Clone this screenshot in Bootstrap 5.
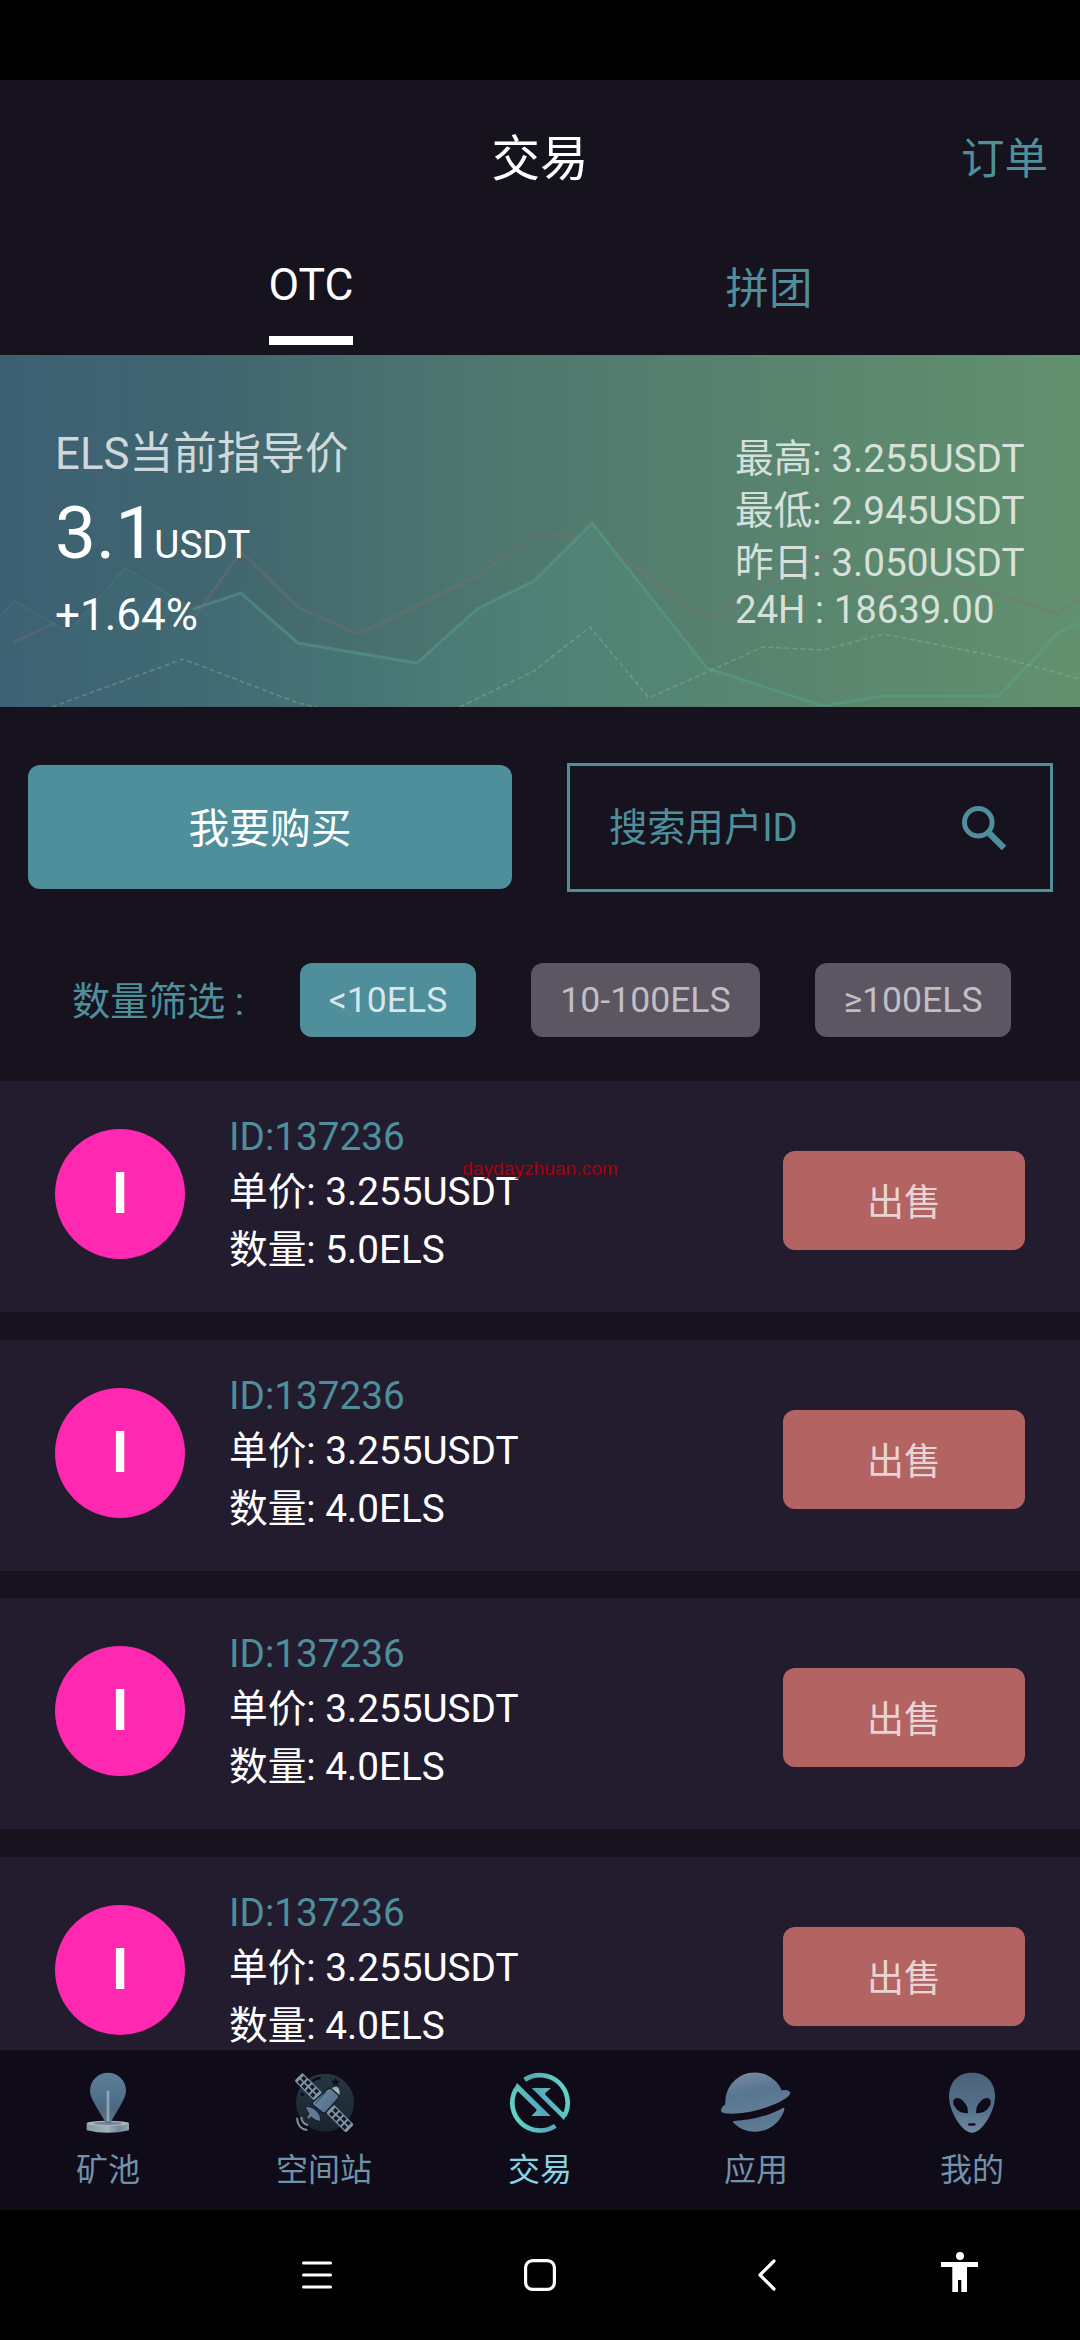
<!DOCTYPE html>
<html lang="zh-CN">
<head>
<meta charset="utf-8">
<title>交易</title>
<meta name="viewport" content="width=device-width, initial-scale=1">
<link href="https://cdn.jsdelivr.net/npm/bootstrap@5.3.0/dist/css/bootstrap.min.css" rel="stylesheet">
<style>
html,body{height:2340px;overflow:hidden}
body{background:#000;color:#fff;font-family:Roboto,"Noto Sans CJK SC",sans-serif;font-weight:400}
.phone{width:1080px;height:2340px}
.statusbar{height:80px}
.screen{height:1970px;background:#16121e}
.teal{color:#4e8f9b}
.topbar{height:157px;padding:3px 32px 0;display:grid;grid-template-columns:1fr auto 1fr}
.topbar h1{font-size:48.5px;font-weight:400;line-height:60px}
.topbar a{font-size:43.5px;line-height:60px;text-decoration:none}
.tabs{height:118px}
.tabs .nav-link{font-size:43.5px;line-height:52px;padding:27px 0 0;color:#4e8f9b;height:108px;border-bottom:9px solid transparent}
.tabs .nav-item{width:458px}
.tabs .nav-link.active{color:#fff;border-color:#fff;padding-top:22px;font-size:44.5px}
.banner{height:352px;background:linear-gradient(90deg,#3c6073 0%,#40656f 18%,#466d6f 30%,#4c756f 42%,#557f6e 62%,#62916f 100%)}
.chart{position:absolute;inset:0}
.quote{padding:69px 0 0 55px;line-height:60px}
.q-name{font-size:43.8px;height:60px;color:#ffffffc0}
.q-price{font-size:73px;line-height:98px;height:91px}
.q-unit{font-size:38.7px;margin-left:-2px}
.q-rate{font-size:44px;line-height:52px;padding-top:14px}
.stats{padding:78px 0 0;font-size:38.7px;color:#ffffffc0;width:345px}
.stats div{line-height:52px;height:52px;white-space:nowrap}
.stats div:last-child{line-height:42px;font-size:38.3px}
.actions{padding:56px 27px 0 28px;height:185px}
.buy{width:484px;height:124px;margin-top:2px;border-radius:12px;background:#4e8f9b;color:#fff;font-size:40.8px;border:0;padding:5px 0 0}
.search{width:486px;height:129px;border:3px solid #4e8f9b;padding:0 44px 0 39px;font-size:38.3px}
.filters{padding:27px 0 0 72px;height:189px;font-size:38.3px;gap:55px}
.filters>span{width:173px;flex:none;white-space:nowrap;padding-top:3px}
.pill{height:74px;border-radius:12px;font-size:35.6px;border:0;padding:2px 0 0;color:#ffffffa0;background:#5b5661;white-space:nowrap;width:229px}
.pill.on{background:#4e8f9b;color:#ffffffc8;width:176px}
.pill:last-child{width:196px}
.offers{height:969px;overflow:hidden;gap:27.6px}
.offer{height:231px;flex:none;background:#231c2f;padding:0 55px}
.avatar{width:130px;height:130px;border-radius:50%;background:#ff28b0;font-size:57px;font-weight:700;margin-top:-5px}
.info{margin-left:44px;font-size:38.7px;padding-top:28px;align-self:flex-start}
.info div{height:58px;line-height:56px}
.info div:first-child{height:55px}
.sell{width:242px;height:99px;border-radius:12px;background:#b46363;color:#ffffffb8;font-size:37px;border:0;margin-top:8px;padding:7px 0 0}
.mark-site{position:absolute;left:0;right:0;top:76px;text-align:center;font:19.2px/24px "Liberation Sans",sans-serif;color:#a80008}
.tabbar{height:160px;background:#0f0b18;color:#7291ab;font-size:32px}
.tabbar>a{width:216px;color:inherit;text-decoration:none;padding-top:14px}
.tabbar span{line-height:42px;margin-top:9px}
.tabbar .current{color:#86d4e6}
.sysbar{height:130px;padding-left:302px}
.sys-home{margin:0 202px 0 192px}
.person{margin:0 0 6px 165px}
</style>
<script src="https://cdn.jsdelivr.net/npm/bootstrap@5.3.0/dist/js/bootstrap.bundle.min.js"></script>
</head>
<body>
<div class="phone">
<div class="statusbar"></div>
<main class="screen">
<header class="topbar align-items-center"><span></span><h1 class="m-0">交易</h1><a href="#" class="teal text-end">订单</a></header>
<ul class="tabs nav justify-content-center list-unstyled m-0">
<li class="nav-item d-flex justify-content-center"><a class="nav-link active" href="#">OTC</a></li>
<li class="nav-item d-flex justify-content-center"><a class="nav-link" href="#">拼团</a></li>
</ul>
<section class="banner position-relative d-flex justify-content-between overflow-hidden">
<svg class="chart" width="1080" height="352" fill="none">
<defs><linearGradient id="area"><stop stop-color="#3f7f88" stop-opacity=".06"/><stop offset=".45" stop-color="#45898a" stop-opacity=".24"/><stop offset=".7" stop-color="#4f9182" stop-opacity=".38"/><stop offset="1" stop-color="#5a9880" stop-opacity=".1"/></linearGradient></defs>
<path d="M0 262L14 246L69 277L125 213L193 254L241 238L298 288L417 308L477 254L534 226L592 168L707 313L823 351H0Z" fill="url(#area)"/>
<path d="M0 262L14 246L69 277L125 213L193 254" stroke="#4f9090" stroke-opacity=".2" stroke-width="2"/>
<path d="M193 254L241 238L298 288L417 308L477 254L534 226L592 168L707 313L823 351L882 341H999L1058 278L1080 268" stroke="#58a38c" stroke-opacity=".45" stroke-width="3"/>
<path d="M14 287L55 268M193 264L241 197L298 252L358 279L477 221L534 181H577M620 202L707 263L823 198L882 242L940 222L1058 259L1080 243" stroke="#876d72" stroke-opacity=".3" stroke-width="3"/>
<path d="M52 352L183 304L298 348L317 352M460 352L534 316L590 272L649 343L763 292L823 295L884 279L999 302L1080 324" stroke="#9fc9a5" stroke-opacity=".32" stroke-width="1.6" stroke-dasharray="5 3"/>
</svg>
<div class="quote position-relative">
<div class="q-name">ELS当前指导价</div>
<div class="q-price">3.1<span class="q-unit">USDT</span></div>
<div class="q-rate">+1.64%</div>
</div>
<div class="stats position-relative"><div>最高: 3.255USDT</div><div>最低: 2.945USDT</div><div>昨日: 3.050USDT</div><div>24H : 18639.00</div></div>
</section>
<section class="actions d-flex justify-content-between align-items-start">
<button class="buy btn">我要购买</button>
<div class="search teal d-flex align-items-center justify-content-between"><span>搜索用户ID</span>
<svg width="44" height="44" viewBox="0 0 44 44" fill="none" stroke="#4e8f9b"><circle cx="16.300" cy="16.300" r="13.800" stroke-width="5"/><path d="M26 26L42 42" stroke-width="6.500"/></svg></div>
</section>
<section class="filters teal d-flex align-items-center"><span>数量筛选 :</span>
<button class="pill on">&lt;10ELS</button><button class="pill">10-100ELS</button><button class="pill">≥100ELS</button></section>
<section class="offers position-relative d-flex flex-column">
<article class="offer d-flex align-items-center"><div class="avatar d-flex align-items-center justify-content-center">I</div><div class="info"><div class="teal">ID:137236</div><div>单价: 3.255USDT</div><div>数量: 5.0ELS</div></div><button class="sell ms-auto">出售</button></article>
<article class="offer d-flex align-items-center"><div class="avatar d-flex align-items-center justify-content-center">I</div><div class="info"><div class="teal">ID:137236</div><div>单价: 3.255USDT</div><div>数量: 4.0ELS</div></div><button class="sell ms-auto">出售</button></article>
<article class="offer d-flex align-items-center"><div class="avatar d-flex align-items-center justify-content-center">I</div><div class="info"><div class="teal">ID:137236</div><div>单价: 3.255USDT</div><div>数量: 4.0ELS</div></div><button class="sell ms-auto">出售</button></article>
<article class="offer d-flex align-items-center"><div class="avatar d-flex align-items-center justify-content-center">I</div><div class="info"><div class="teal">ID:137236</div><div>单价: 3.255USDT</div><div>数量: 4.0ELS</div></div><button class="sell ms-auto">出售</button></article>
<div class="mark-site">daydayzhuan.com</div>
</section>
</main>
<nav class="tabbar d-flex">
<a href="#" class="d-flex flex-column align-items-center">
<svg width="80" height="76" viewBox="-21 0 240 228">
<defs>
<linearGradient id="pin" x2="0" y2="1"><stop stop-color="#5e7f9a"/><stop offset=".7" stop-color="#4b6b85"/><stop offset="1" stop-color="#8a9fb0"/></linearGradient>
<linearGradient id="base"><stop stop-color="#8399aa"/><stop offset=".5" stop-color="#a3b0ba"/><stop offset=".75" stop-color="#74899b"/><stop offset="1" stop-color="#91a3b1"/></linearGradient>
</defs>
<path d="M35 178V199Q98 214 162 199V178Z" fill="url(#base)"/><ellipse cx="98.500" cy="178" rx="63.500" ry="8" fill="#a9b4bd"/><ellipse cx="98.500" cy="178" rx="42" ry="5" fill="#758797"/>
<path d="M99 26A54 54 0 0 1 153 80C153 106 128 132 107 174H92C70 132 45 106 45 80A54 54 0 0 1 99 26Z" fill="url(#pin)"/><path d="M61 125Q99 142 137 125L107 176H92Z" fill="#46647d" fill-opacity=".65"/><path d="M95 80H103V172H95Z" fill="#a3b1bd" fill-opacity=".8"/></svg>
<span>矿池</span></a>
<a href="#" class="d-flex flex-column align-items-center">
<svg width="80" height="76" viewBox="-3 0 240 228">
<defs>
<linearGradient id="moon" x2="0" y2="1"><stop stop-color="#273641"/><stop offset="1" stop-color="#1a2430"/></linearGradient>
<linearGradient id="hull" x2="1" y2="1"><stop stop-color="#7590a8"/><stop offset="1" stop-color="#48647f"/></linearGradient>
<g id="panel"><rect x="-42" y="-17" width="84" height="34" rx="5" fill="#8295a7"/><path d="M-33 -8H36M-33 8H36" stroke="#111925" stroke-width="11" stroke-dasharray="12 6"/></g>
</defs>
<circle cx="120" cy="116" r="87" fill="url(#moon)"/>
<path d="M82 51Q94 42 107 42" stroke="#0b0e16" stroke-width="8" fill="none"/><path d="M152 41L156 50L166 51L158 57L161 67L152 61L143 67L146 57L138 51L148 50Z" fill="#0b0e16"/>
<path d="M48 88l8 6" stroke="#0b0e16" stroke-width="8"/>
<use href="#panel" transform="translate(70 68) rotate(45)"/><use href="#panel" transform="translate(165 164) rotate(45)"/>
<path d="M136 76Q146 66 157 69Q169 80 161 98Z" fill="#a4afb9"/>
<path d="M127 76Q133 70 140 75L160 93Q164 98 159 104L122 145Q117 149 111 145L84 123Q80 118 84 113Z" fill="url(#hull)" stroke="#141c28" stroke-width="4"/>
<path d="M123 84L91 119" stroke="#26384b" stroke-width="3"/>
<path d="M60 129Q75 124 92 138Q110 154 106 173Q77 168 66 139Z" fill="#5d7b96" stroke="#141c28" stroke-width="3"/>
<path d="M78 151L69 162" stroke="#71879a" stroke-width="6"/><g fill="none" stroke="#8492a0" stroke-width="6"><path d="M49 159Q50 180 69 183"/><path d="M36 161Q37 194 67 198"/></g></svg>
<span>空间站</span></a>
<a href="#" class="current d-flex flex-column align-items-center">
<svg width="80" height="76" viewBox="0 0 240 228">
<defs><linearGradient id="swap" gradientUnits="userSpaceOnUse" x1="30" y1="150" x2="210" y2="80"><stop stop-color="#63d8c8"/><stop offset=".5" stop-color="#55a7b9"/><stop offset="1" stop-color="#63d8c8"/></linearGradient></defs>
<g fill="none" stroke="url(#swap)" stroke-width="14"><path d="M74 47.400A83 83 0 0 1 193 156"/><path d="M166 185.600A83 83 0 0 1 47 77"/></g>
<g fill="url(#swap)"><path d="M95 72H153L136 87V92L187 143L201 148L192 168Z"/><path d="M152 156H94L109 141V136L55 83L39 80L51 57Z"/></g></svg>
<span>交易</span></a>
<a href="#" class="d-flex flex-column align-items-center">
<svg width="80" height="76" viewBox="0 0 240 228">
<defs><linearGradient id="planet" x2=".35" y2="1"><stop stop-color="#7b8ea3"/><stop offset=".55" stop-color="#587690"/><stop offset="1" stop-color="#617d96"/></linearGradient></defs>
<g fill="url(#planet)"><path d="M28 116A88 88 0 0 1 197 79Q220 75 223 87C221 104 160 132 100 144Q50 152 22 147Q11 143 17 133Q20 126 28 121Z"/><path d="M53 171C110 168 165 153 202 131Q207 131 204 140A92 92 0 0 1 57 181Q47 174 53 171Z"/></g></svg>
<span>应用</span></a>
<a href="#" class="d-flex flex-column align-items-center">
<svg width="80" height="76" viewBox="0 0 240 228">
<defs><linearGradient id="alien" x2="0" y2="1"><stop stop-color="#4b6379"/><stop offset=".6" stop-color="#53708a"/><stop offset="1" stop-color="#71899f"/></linearGradient></defs>
<path d="M120 26C165 26 189 57 189 98C189 142 150 206 120 206C90 206 51 142 51 98C51 57 75 26 120 26Z" fill="url(#alien)"/>
<g fill="#0f0b18"><path d="M66 106Q76 98 89 107Q109 122 108 147Q89 150 74 136Q58 118 66 106Z"/><path d="M174 106Q164 98 151 107Q131 122 132 147Q151 150 166 136Q182 118 174 106Z"/><rect x="109" y="178" width="21" height="7"/></g></svg>
<span>我的</span></a>
</nav>
<footer class="sysbar d-flex align-items-center">
<svg width="30" height="30" stroke="#fff" stroke-width="3" stroke-linecap="round"><path d="M1.500 3H28.500M1.500 15H28.500M1.500 27H28.500"/></svg>
<svg class="sys-home" width="32" height="32" fill="none" stroke="#fff" stroke-width="3.200"><rect x="1.600" y="1.600" width="28.800" height="28.800" rx="7"/></svg>
<svg width="18" height="32" fill="none" stroke="#fff" stroke-width="3.200" stroke-linecap="round" stroke-linejoin="round"><path d="M16 2L2 16L16 30"/></svg>
<svg class="person" width="37" height="40" fill="#fff"><circle cx="19" cy="4" r="4"/><path d="M0 10H37V15H26V40H20.300V28H17V40H11.300V15H0Z"/></svg>
</footer>
</div>
</body>
</html>
